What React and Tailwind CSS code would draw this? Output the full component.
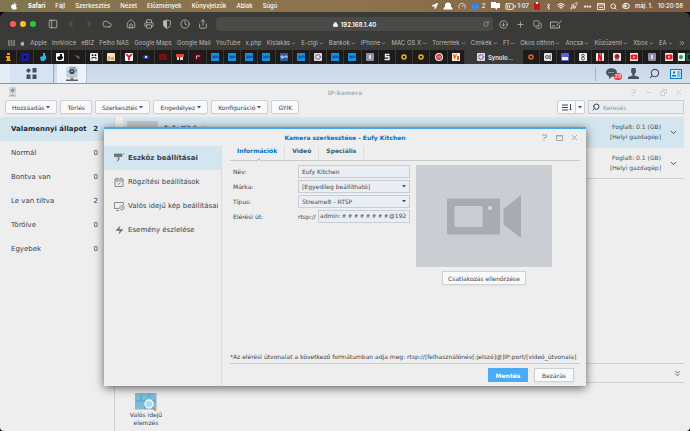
import React, { useState } from 'react';
import {
  BatteryMedium,
  Bluetooth,
  ChevronDown,
  ChevronLeft,
  ChevronRight,
  ChevronsDown,
  ChevronsRight,
  CircleArrowDown,
  Clock,
  Cloud,
  Copy,
  Ellipsis,
  Gauge,
  House,
  Lock,
  PanelLeft,
  Plus,
  Printer,
  Rocket,
  RotateCw,
  Search,
  Share,
  ToggleLeft,
  Wifi,
  Zap
} from 'lucide-react';
import { FaApple, FaLocationArrow } from 'react-icons/fa';

const menus = ['Fájl', 'Szerkesztés', 'Nézet', 'Előzmények', 'Könyvjelzők', 'Ablak', 'Súgó'];

const bookmarks = [
  { name: 'Apple' },
  { name: 'InnVoice' },
  { name: 'eBIZ' },
  { name: 'Felho NAS' },
  { name: 'Google Maps' },
  { name: 'Google Mail' },
  { name: 'YouTube' },
  { name: 'x.php' },
  { name: 'Kislakás', folder: true },
  { name: 'E-cigi', folder: true },
  { name: 'Bankok', folder: true },
  { name: 'iPhone', folder: true },
  { name: 'MAC OS X', folder: true },
  { name: 'Torrentek', folder: true },
  { name: 'Címkék', folder: true },
  { name: 'F1', folder: true },
  { name: 'Okos otthon', folder: true },
  { name: 'Ancsa', folder: true },
  { name: 'Közüzemi', folder: true },
  { name: 'Xbox', folder: true },
  { name: 'EA', folder: true },
];

const tabsBefore = [
  'info', 'ring-blue', 'duck', 'duck-white', 'dim', 'panda', 'orange', 'y', 'eye', 'darkred', 'mail', 'maroon',
  'dsm', 'dsm', 'dsm', 'dsm', 'sim', 'dsm', 'flower', 'dsm', 'dsm', 'grey', 's', 'ring-yellow', 'ring-yellow',
  'target', 'split',
];
const tabsAfter = ['ring-orange', 'signal', 'ghost', 'b', 'n', 'bug', 'youtube', 'grey', 'youtube'];

const states = [
  { name: 'Valamennyi állapot', count: 2 },
  { name: 'Normál', count: 0 },
  { name: 'Bontva van', count: 0 },
  { name: 'Le van tiltva', count: 2 },
  { name: 'Törölve', count: 0 },
  { name: 'Egyebek', count: 0 },
];

const Favicon = ({ kind }) => {
  const drawings = {
    info: <path d="M3 0h3v2H3zM2 3h4v4h1v1H2V7h1V5H2z" fill="#f39a1b" />,
    'ring-blue': <><path d="M1.500 1.500h5v5h-5z" fill="#0a0a30" stroke="#1620d8" strokeWidth="2" /><path d="M0 0h2v2H0zM6 0h2v2H6zM0 6h2v2H0zM6 6h2v2H6z" fill="#1018b0" /></>,
    duck: <path d="M4 0h2v2l1 1v3L5 8H2L1 4l3-1z" fill="#2db4ec" />,
    'duck-white': <><rect width="8" height="8" rx="1" fill="#fff" /><path d="M4 1h2v2l1 1v1L5 7H2L1 4l3-1z" fill="#111" /></>,
    dim: <path d="M2 2l4 1 1 3-3-1z" fill="#6c6045" />,
    panda: <><rect width="8" height="8" rx="1" fill="#eee" /><circle cx="2.500" cy="2.200" r=".9" /><circle cx="5.500" cy="2.200" r=".9" /><path d="M2 6.500V4.500h4v2" fill="none" stroke="#111" strokeWidth=".8" /></>,
    orange: <><rect width="8" height="8" rx="1" fill="#f3e6c9" /><path d="M1 3h2v4H1zM4 4h3v3H4z" fill="#eda52d" /></>,
    y: <><rect width="8" height="8" rx="1" fill="#fff" /><path d="M1.200 1L4 4.200 6.800 1M4 4v3.500" fill="none" stroke="#d8142c" strokeWidth="1.800" /></>,
    eye: <><ellipse cx="4" cy="4" rx="3.500" ry="2" fill="#1c3c86" /><circle cx="4" cy="4" r="1.200" fill="#dfe9ff" /></>,
    darkred: <path d="M0 1h8v6H0z" fill="#701317" />,
    mail: <><path d="M0 1h8v3H0z" fill="#e04338" /><path d="M1 4h2v3H1zM4 4h3v3H4z" fill="#ddd" /></>,
    maroon: <><path d="M0 0h8v8H0z" fill="#4e0c10" /><path d="M2 2.500h4v1H2zM2 3h1v3H2z" fill="#c8b9b9" /></>,
    dsm: <><rect width="8" height="8" fill="#1590e6" /><path d="M1 3h1.500v2H1M4.500 3h-1v1h1v1h-1M5.500 5V3h1.500v2" fill="none" stroke="#0a4374" strokeWidth=".7" /></>,
    sim: <><rect width="8" height="8" fill="#2a5f9e" /><path d="M2.500 3H1v1h1.500v1H1M3.700 3v2M5 5V3h2v2" fill="none" stroke="#fff" strokeWidth=".7" /></>,
    flower: <><rect width="8" height="8" rx="1" fill="#e6e0ee" /><circle cx="4" cy="4" r="2.300" fill="none" stroke="#84749f" strokeWidth="1.800" strokeDasharray="1 .5" /></>,
    grey: <><rect width="8" height="8" rx="1" fill="#8c90a2" /><path d="M3 2h2v4H3z" fill="#dde" /></>,
    s: <path d="M6.500 1.500h-4v2.200h3.500v2.800H1.500" fill="none" stroke="#f4f4f4" strokeWidth="1.400" />,
    'ring-yellow': <circle cx="4" cy="4" r="2" fill="none" stroke="#e9b824" strokeWidth="1.500" />,
    'ring-orange': <circle cx="4" cy="4" r="2" fill="none" stroke="#dd6a2c" strokeWidth="1.500" />,
    target: <><circle cx="4" cy="4" r="4" fill="#fff" /><circle cx="4" cy="4" r="3" fill="#c8202a" /><path d="M3 2.500v3M5 2.500v3" stroke="#fff" strokeWidth=".8" /></>,
    split: <><rect width="8" height="8" fill="#f6efe8" /><path d="M1 1h1l1 2 1-2h1L3 6H2zM5 3h2v4H5z" fill="#ee5a24" /></>,
    signal: <><rect width="8" height="8" rx="1" fill="#e9e9e9" /><circle cx="3" cy="4" r="1.500" fill="none" stroke="#333" strokeWidth=".8" /><path d="M5 2q2 2 0 4M6.500 1v6" fill="none" stroke="#555" strokeWidth=".7" /></>,
    ghost: <><rect width="8" height="8" rx="1" fill="#5566d4" /><path d="M1 4h6v3H1z" fill="#f2f2ff" /></>,
    b: <><rect width="8" height="8" rx="1" fill="#eee" /><circle cx="4" cy="2.500" r="1.300" fill="none" stroke="#333" strokeWidth=".8" /><circle cx="4" cy="5.500" r="1.500" fill="none" stroke="#333" strokeWidth=".8" /></>,
    n: <><rect width="8" height="8" rx="1" fill="#f7f0f0" /><path d="M2 0h1.500l1 4V0H6v8H4.500l-1-4v4H2z" fill="#d2141e" /></>,
    bug: <><rect width="8" height="8" rx="1" fill="#eee" /><circle cx="4" cy="3.500" r="2.500" fill="#b8232b" /><path d="M2 7h4M3 3h2" stroke="#333" strokeWidth=".8" /></>,
    youtube: <><rect width="8" height="8" rx="1" fill="#fff" /><rect x="0.500" y="1.500" width="7" height="5" rx="1" fill="#f2161b" /><path d="M3.300 2.800v2.400L5.300 4z" fill="#fff" /></>,
  };
  return <svg viewBox="0 0 8 8" className="w-2 h-2 shrink-0">{drawings[kind]}</svg>;
};

const CameraIcon = ({ className }) => (
  <svg viewBox="0 0 14 16" className={className}>
    <rect x="1.500" y="0.500" width="11" height="11" rx="1" fill="#c3c9ce" />
    <path d="M2 1h10v5H2z" fill="#5ba3c6" />
    <path d="M2 1l3 0-3 5zM12 1v3l-2-3z" fill="#d6ecf6" />
    <circle cx="7" cy="5.500" r="3.600" fill="#cfd6db" />
    <circle cx="7" cy="5.500" r="2.700" fill="#3b4750" />
    <circle cx="7" cy="5.200" r="1" fill="#8fb6cf" />
    <path d="M5.500 11.500h3V14h-3z" fill="#7e868d" />
    <path d="M1 13.500h12v1.500H1z" fill="#59626a" />
  </svg>
);

const MenuBar = () => (
  <header className="h-3 shrink-0 flex items-center justify-between pl-2.5 pr-[7px] bg-linear-to-r from-[#83754f] via-[#8e734c] to-[#7d5e46] text-white text-[6px] leading-3 font-medium">
    <nav className="flex items-center gap-2.5">
      <FaApple size={8} />
      <a href="#safari" className="font-bold">Safari</a>
      {menus.map((m) => <a key={m} href={`#${m}`}>{m}</a>)}
    </nav>
    <div className="flex items-center gap-[5px]">
      <FaLocationArrow size={6} />
      <svg viewBox="0 0 10 8" className="w-2.5 h-2"><path d="M2 5V3.500a3 3 0 0 1 6 0V5l1.500 1v1.500h-9V6z" fill="#fff" /></svg>
      <Gauge size={8} />
      <span className="flex items-center gap-[3px]">
        <svg viewBox="0 0 8 8" className="w-2 h-2"><circle cx="4" cy="4" r="3.500" fill="#2c8df2" /><path d="M1.500 1l2.500 1.500L6.500 1 4 3.500z" fill="#195fae" /></svg>
        2
      </span>
      <svg viewBox="0 0 9 8" className="w-[9px] h-2"><path d="M0 0h5v1h4v5H6v2L4 6H0z" fill="#fff" /></svg>
      <span className="flex items-center gap-0.5"><BatteryMedium size={11} /> 1:07</span>
      <svg viewBox="0 0 6 8" className="w-1.5 h-2"><rect y="1" width="6" height="7" rx="1" fill="#c4161c" /><path d="M2 0h2v2H2z" fill="#eee" /></svg>
      <Bluetooth size={7} />
      <Wifi size={8} strokeWidth={3} />
      <Rocket size={8} />
      <Ellipsis size={9} strokeWidth={4} />
      <svg viewBox="0 0 8 7" className="w-2 h-[7px]"><path d="M.5.5h7v6h-7zM0 2h8M2 4.500h4" fill="none" stroke="#fff" strokeWidth=".8" /></svg>
      <Search size={7} strokeWidth={3} />
      <ToggleLeft size={8} strokeWidth={3} />
      <span>máj. 1.</span>
      <span>10:20:58</span>
    </div>
  </header>
);

const BrowserBar = () => (
  <div className="shrink-0 bg-[#3a3a38] text-[#b9b9b7] rounded-t-md">
    <div className="flex items-center h-6 pl-2.5 pr-32">
      <div className="flex gap-1 pr-3">
        <span className="size-1.5 rounded-full bg-[#fc5b57]" />
        <span className="size-1.5 rounded-full bg-[#fdbc30]" />
        <span className="size-1.5 rounded-full bg-[#2bc840]" />
      </div>
      <div className="flex items-center gap-2 pr-2">
        <button aria-label="Oldalsáv"><PanelLeft size={10} /></button>
        <button aria-label="Vissza" className="text-[#777]"><ChevronLeft size={10} /></button>
        <button aria-label="Előre" className="text-[#777]"><ChevronRight size={10} /></button>
        <button aria-label="iCloud"><Cloud size={10} /></button>
        <button aria-label="Kezdőlap" className="pl-1.5"><House size={10} /></button>
        <button aria-label="Nyomtatás"><Printer size={10} /></button>
        <button aria-label="Adatvédelem">
          <svg viewBox="0 0 10 10" className="size-2.5"><path d="M5 1l3.500 1v3.500Q8.500 8 5 9.500 1.500 8 1.500 5.500V2z" fill="none" stroke="currentColor" strokeWidth=".8" /><path d="M5 1v8.500Q1.500 8 1.500 5.500V2z" fill="currentColor" /></svg>
        </button>
        <button aria-label="Előzmények"><Clock size={10} /></button>
        <button aria-label="Megosztás"><Share size={10} /></button>
      </div>
      <div className="relative flex-1 h-3.5 flex items-center justify-center gap-[3px] rounded bg-[#4a4a48] text-white text-[6px] font-semibold">
        <Lock size={5} fill="currentColor" strokeWidth={4} />
        <span>192.168.1.40</span>
        <button aria-label="Újratöltés" className="absolute right-1 text-[#b9b9b7]"><RotateCw size={6} /></button>
      </div>
      <div className="flex items-center gap-2 pl-1.5">
        <button aria-label="Letöltések"><CircleArrowDown size={9} /></button>
        <button aria-label="Új lap"><Plus size={9} /></button>
        <button aria-label="Lapok"><Copy size={9} className="rotate-180" /></button>
        <button aria-label="Jegyzet">
          <svg viewBox="0 0 12 9" className="w-3 h-[9px]"><path d="M8 2H.5v6h9V5M2 6h3M11.500.5L6.500 6" fill="none" stroke="currentColor" strokeWidth=".9" /></svg>
        </button>
      </div>
    </div>
    <nav className="flex items-center justify-between h-3.5 pl-2 pr-1 text-[6px] leading-3 whitespace-nowrap">
      <svg viewBox="0 0 7 6" className="w-[7px] h-1.5"><path d="M0 1h7M0 3h7M0 5h7" stroke="currentColor" strokeDasharray="1.800 .8" strokeWidth="1.200" /></svg>
      <FaApple size={5} />
      {bookmarks.map((b) => (
        <a key={b.name} href={`#${b.name}`} className="flex items-center gap-px">
          {b.name}
          {b.folder && <ChevronDown size={5} strokeWidth={3} />}
        </a>
      ))}
      <ChevronsRight size={8} />
    </nav>
    <div className="flex h-3.5 bg-[#1d1c1b]">
      {tabsBefore.map((t, i) => (
        <button key={i} aria-label={t} className="flex-1 flex items-center justify-center border-r border-[#363534]"><Favicon kind={t} /></button>
      ))}
      <button className="w-[58px] shrink-0 flex items-center gap-[3px] pl-3 bg-[#3a3a38] text-white text-[6px] font-medium">
        <Favicon kind="flower" />
        Synolo...
      </button>
      {tabsAfter.map((t, i) => (
        <button key={i} aria-label={t} className="flex-1 flex items-center justify-center border-r border-[#363534]"><Favicon kind={t} /></button>
      ))}
      <div className="w-3 shrink-0 flex items-center">
        <svg viewBox="0 0 12 8" className="w-3 h-2"><rect width="7" height="8" fill="#e8eee8" /><circle cx="3" cy="4" r="2" fill="#2d9b46" /><path d="M12 1H9v6h3" fill="none" stroke="#1e8f8c" /></svg>
      </div>
    </div>
  </div>
);

const Taskbar = () => (
  <div className="shrink-0 flex h-5 bg-linear-to-b from-[#c8d6e8] to-[#d5e0ee] border-b border-[#8d97a2]">
    <div className="w-2.5 bg-[#e4ecf6]" />
    <button aria-label="Főmenü" className="w-11 flex items-center justify-center bg-[#d8e3f1] border-r border-[#9aa9bd]">
      <svg viewBox="0 0 11 11" className="size-[11px]" fill="#435260"><path d="M2.500 0L5 2.500 2.500 5 0 2.500zM6.500 0h4v4.500h-4zM.5 6.500h4V11h-4zM6.500 6.500h4V11h-4z" /></svg>
    </button>
    <button aria-label="IP-kamera" className="w-[30px] ml-[3px] flex items-center justify-center bg-[#eef3f9] border-r border-[#b3c0d1]">
      <CameraIcon className="w-3.5 h-4" />
    </button>
    <div className="flex-1 flex items-center justify-end gap-2.5 pr-2 text-[#46535f]">
      <span className="h-3.5 w-px bg-[#a8b5c5]" />
      <button aria-label="Értesítések" className="relative">
        <svg viewBox="0 0 12 11" className="w-3 h-[11px]"><ellipse cx="5.500" cy="4.500" rx="5.500" ry="4.200" fill="currentColor" /><path d="M3 8v3l3-2.500z" fill="currentColor" /><path d="M2.500 4.500h6" stroke="#c8d6e8" strokeDasharray="1 1" /></svg>
        <span className="absolute -right-1 -bottom-px rounded-full bg-[#f0363f] px-px text-white text-[5px] leading-[7px]">29</span>
      </button>
      <button aria-label="Felhasználó">
        <svg viewBox="0 0 11 11" className="size-[11px]" fill="currentColor"><path d="M3.500 0h4l.5 4-1.500 2.500v1L11 9v2H0V9l4.500-1.500v-1L3 4z" /></svg>
      </button>
      <button aria-label="Keresés"><Search size={11} strokeWidth={2.5} className="-scale-x-100" /></button>
      <button aria-label="Widgetek">
        <svg viewBox="0 0 12 10" className="w-3 h-2.5"><rect x=".5" y=".5" width="11" height="9" fill="#d6e8f7" stroke="#0b78c4" /><path d="M3 2.500h2v2H3zM2 6h4v1.500H2z" fill="#0b78c4" /><path d="M7 3h3.500M7 5h3.500M7 7h3.500" fill="none" stroke="#0b78c4" strokeWidth=".8" /></svg>
      </button>
    </div>
  </div>
);

const toolButton = 'h-[14px] flex items-center gap-0.5 px-1.5 rounded-xs border border-[#cdd1d6] bg-[#f8f9fb] shadow-xs';

const Caret = () => <svg viewBox="0 0 4 3" className="w-1 h-[3px]"><path d="M0 0h4L2 2.500z" fill="#46535f" /></svg>;

const Toolbar = () => (
  <div className="flex items-center gap-[3px] pl-[5px] pr-1.5 pb-[3px] text-[6px]">
    <button className={toolButton}>Hozzáadás <Caret /></button>
    <button className={toolButton}>Törlés</button>
    <button className={toolButton}>Szerkesztés <Caret /></button>
    <button className={toolButton}>Engedélyez <Caret /></button>
    <button className={toolButton}>Konfiguráció <Caret /></button>
    <button className={toolButton}>GYIK</button>
    <div className="ml-auto flex h-[14px] rounded-xs border border-[#cdd1d6] bg-[#f8f9fb] shadow-xs">
      <button aria-label="Rendezés" className="w-[18px] flex items-center justify-center border-r border-[#cdd1d6]">
        <svg viewBox="0 0 10 7" className="w-2.5 h-[7px]"><path d="M0 1h6M0 3.500h6M0 6h6M8.500 0v6M7.500 5l1 1 1-1" fill="none" stroke="#3d4a56" /></svg>
      </button>
      <button aria-label="Rendezési mód" className="w-2 flex items-center justify-center"><Caret /></button>
    </div>
    <label className="w-24 h-[14px] flex items-center gap-[3px] px-[3px] border border-[#c8cfd6] bg-[#e9eef2]">
      <Search size={8} className="-scale-x-100 shrink-0" strokeWidth={3} />
      <input type="search" placeholder="Keresés" aria-label="Keresés" className="w-full min-w-0 outline-none placeholder:text-[#8c959d]" />
    </label>
  </div>
);

const CameraRow = ({ name, active }) => (
  <li className={`h-[31px] flex items-center border-b ${active ? 'bg-[#d3e5ee] border-[#d3e5ee]' : 'border-[#cfcfcf]'}`}>
    <div className="w-[31px] h-[23px] ml-1 bg-[#c3c6c9]" />
    <p className="self-start pt-[7px] pl-1.5 flex-1 text-[6px] leading-[8px] font-bold">{name}</p>
    <p className="text-right leading-[10px] text-[#46505a]">Foglalt: 0.1 (GB)<br />[Helyi gazdagép]</p>
    <button aria-label="Részletek" className="px-1.5 ml-0.5"><ChevronDown size={9} strokeWidth={2.5} /></button>
  </li>
);

const navItems = [
  {
    name: 'Eszköz beállításai',
    icon: <path d="M0 1h8v2.500H0zM9 1l1.500-.5M5 4v2.500L3 8.500M3 5h2" fill="#6c757c" stroke="#6c757c" strokeWidth=".8" />,
  },
  {
    name: 'Rögzítési beállítások',
    icon: <path d="M1 2h8v7.500H1zM1 4h8M3 .5v2M7 .5v2M3.500 6.500l1 1 2-2" fill="none" stroke="#6c757c" strokeWidth=".8" />,
  },
  {
    name: 'Valós idejű kép beállításai',
    icon: <path d="M5 7.500H.5v-6h9V4M2 9.500h3M8 4.500a2.200 2.200 0 1 0 .01 0zM8 5.500v1.500h1" fill="none" stroke="#6c757c" strokeWidth=".8" />,
  },
  { name: 'Esemény észlelése', icon: null },
];

const fieldBox = 'h-[13px] w-[112px] border border-[#c6cfd7] bg-[#e8eef3] text-[6px] text-[#3d4852] outline-none';

const EditDialog = () => {
  const [tab, setTab] = useState('Információk');
  const [name, setName] = useState('Eufy Kitchen');
  const [path, setPath] = useState('admin:＃＃＃＃＃＃＃＃@192');

  return (
    <section role="dialog" aria-label="Kamera szerkesztése" className="absolute inset-x-[104px] top-[43px] bottom-[45px] flex flex-col border-t-2 border-[#46a5ec] bg-[#eeeeee] shadow-[0_2px_9px_rgba(0,0,0,0.6)] text-[6px]">
      <div className="relative h-[17px] shrink-0 flex items-center justify-center">
        <h2 className="font-bold text-[#0470bd]">Kamera szerkesztése - Eufy Kitchen</h2>
        <div className="absolute right-2 flex items-center gap-2 text-[#9aa9b6]">
          <button aria-label="Súgó"><svg viewBox="0 0 7 7" className="size-[7px]"><path d="M1 1h4.500v2.500H3V5M3 6v1" fill="none" stroke="currentColor" /></svg></button>
          <button aria-label="Teljes méret"><svg viewBox="0 0 7 7" className="size-[7px]"><path d="M.5 1.500h6v5h-6zM0 2h7" fill="none" stroke="currentColor" /></svg></button>
          <button aria-label="Ablak bezárása"><svg viewBox="0 0 7 7" className="size-[7px]"><path d="M1 1l5 5M6 1L1 6" fill="none" stroke="currentColor" /></svg></button>
        </div>
      </div>
      <div className="flex-1 min-h-0 flex">
        <nav className="w-[118px] shrink-0 border-r border-[#dcdcdc] text-[7px] whitespace-nowrap">
          {navItems.map((item, i) => (
            <a
              key={item.name}
              href={`#${item.name}`}
              className={`h-6 flex items-center gap-[3px] pl-2.5 ${i === 0 ? 'bg-[#d3e5ee] font-bold' : ''}`}
            >
              {item.icon ? <svg viewBox="0 0 11 10" className="w-[11px] h-2.5">{item.icon}</svg> : <Zap size={10} className="w-[11px]" fill="#6c757c" stroke="none" />}
              {item.name}
            </a>
          ))}
        </nav>
        <div className="flex-1 min-w-0 flex flex-col pl-2 pr-1.5">
          <div role="tablist" className="h-[15px] shrink-0 flex items-start border-b border-[#c9c9c9] font-bold">
            {['Információk', 'Videó', 'Speciális'].map((t) => (
              <button
                key={t}
                role="tab"
                aria-selected={tab === t}
                onClick={() => setTab(t)}
                className={`relative h-[14px] px-[7px] pb-1.5 border-r border-[#dedede] ${tab === t ? 'text-[#0470bd]' : 'text-[#4c5660]'}`}
              >
                {t}
                {tab === t && <span className="absolute -bottom-[3px] left-1/2 size-1 rotate-45 border-l border-t border-[#c0c0c0] bg-[#eeeeee]" />}
              </button>
            ))}
          </div>
          <div className="flex-1 flex items-start gap-1.5 pt-1 pl-[3px]">
            <form className="flex flex-col gap-[2px]">
              <div className="flex items-center">
                <label htmlFor="name" className="w-[65px]">Név:</label>
                <input id="name" className={`${fieldBox} px-[3px]`} value={name} onChange={(e) => setName(e.target.value)} />
              </div>
              <div className="flex items-center">
                <label htmlFor="brand" className="w-[65px]">Márka:</label>
                <div className="relative flex items-center">
                  <select id="brand" className={`${fieldBox} px-[3px] appearance-none`}>
                    <option>[Egyedileg beállítható]</option>
                  </select>
                  <span className="absolute right-1 pointer-events-none"><Caret /></span>
                </div>
              </div>
              <div className="flex items-center">
                <label htmlFor="type" className="w-[65px]">Típus:</label>
                <div className="relative flex items-center">
                  <select id="type" className={`${fieldBox} px-[3px] appearance-none`}>
                    <option>Streamelt - RTSP</option>
                  </select>
                  <span className="absolute right-1 pointer-events-none"><Caret /></span>
                </div>
              </div>
              <div className="flex items-center">
                <label htmlFor="path" className="w-[65px]">Elérési út:</label>
                <span className="w-5">rtsp://</span>
                <input id="path" className="h-[13px] w-[92px] px-px border border-[#c6cfd7] bg-[#e8eef3] text-[#3d4852] outline-none" value={path} onChange={(e) => setPath(e.target.value)} />
              </div>
            </form>
            <div className="w-[136px] flex flex-col items-center gap-1">
              <div className="w-full h-[102px] flex items-center justify-center bg-[#caced3]">
                <svg viewBox="0 0 74 43" className="w-[74px] h-[43px]" fill="#a8abb0">
                  <path fillRule="evenodd" d="M1 3.500h51q1 0 1 1v34q0 1-1 1H1q-1 0-1-1v-34q0-1 1-1zM9 11q-1.500 0-1.500 1.500v18Q7.500 32 9 32h25q1.500 0 1.500-1.500v-18Q35.500 11 34 11z" />
                  <circle cx="43" cy="13" r="2" fill="#d5d9dd" />
                  <path d="M56.500 14L74 0v43L56.500 29.500z" />
                </svg>
              </div>
              <button className="h-[14px] px-[5px] border border-[#cdd1d6] bg-[#f8f9fb] shadow-xs">Csatlakozás ellenőrzése</button>
            </div>
          </div>
          <p className="pb-0.5 whitespace-nowrap">*Az elérési útvonalat a következő formátumban adja meg: rtsp://[felhasználónév[:jelszó]@]IP:port/[videó_útvonala]</p>
          <div className="flex justify-end gap-1.5 border-t border-[#cccccc] pt-1 pb-1 pr-1.5">
            <button className="w-10 h-[14px] bg-[#4aabf5] font-bold text-white">Mentés</button>
            <button className="w-10 h-[14px] border border-[#cdd1d6] bg-[#f8f9fb] shadow-xs">Bezárás</button>
          </div>
        </div>
      </div>
    </section>
  );
};

const App = () => (
  <div className="h-screen flex flex-col overflow-hidden bg-black font-['Inter',sans-serif]">
    <MenuBar />
    <BrowserBar />
    <Taskbar />
    <main className="relative flex-1 min-h-0 flex flex-col overflow-hidden rounded-b bg-[#eeeeee] font-['DejaVu_Sans',sans-serif] text-[6px] text-[#37424d]">
      <div className="relative h-4 shrink-0 flex items-center justify-center">
        <CameraIcon className="absolute left-2 w-[9px] h-2.5 opacity-60" />
        <h1 className="font-bold text-[#b3b3b3]">IP-kamera</h1>
        <div className="absolute right-2 flex items-center gap-2 text-[#cfcfcf]">
          <svg viewBox="0 0 7 7" className="size-[7px]"><path d="M1 1h4.500v2.500H3V5M3 6v1" fill="none" stroke="currentColor" /></svg>
          <svg viewBox="0 0 7 7" className="size-[7px]"><path d="M1 3.500h5" stroke="currentColor" /></svg>
          <svg viewBox="0 0 7 7" className="size-[7px]"><path d="M.5 2.500h4v4h-4zM2.500 2V.5h4v4H5" fill="none" stroke="currentColor" /></svg>
          <svg viewBox="0 0 7 7" className="size-[7px]"><path d="M1 1l5 5M6 1L1 6" fill="none" stroke="currentColor" /></svg>
        </div>
      </div>
      <Toolbar />
      <div className="flex-1 min-h-0 flex">
        <nav className="w-[115px] shrink-0 border-r border-[#d2d2d2] text-[7px]">
          {states.map((s, i) => (
            <a key={s.name} href={`#${s.name}`} className={`h-6 flex items-center justify-between pl-[11px] pr-4 ${i === 0 ? 'bg-[#d3e5ee] font-bold text-[#1f2b36]' : ''}`}>
              <span>{s.name}</span>
              <span>{s.count}</span>
            </a>
          ))}
        </nav>
        <div className="flex-1 flex flex-col pl-2 pr-1.5">
          <ul className="flex-1">
            <CameraRow name="Eufy Kitchen" active />
            <CameraRow />
          </ul>
          <div className="h-5 flex items-center justify-end border-y border-[#cfcfcf]">
            <button aria-label="Lenyitás" className="pr-0.5"><ChevronsDown size={9} /></button>
          </div>
          <div className="h-12 pt-2.5">
            <button className="w-[46px] flex flex-col items-center leading-[8px]">
              <svg viewBox="0 0 22 18" className="w-[22px] h-[18px]">
                <rect width="21" height="16" fill="#78bdd8" stroke="#a8aab8" />
                <path d="M1 8h20M6 1v7M10 8v8M14 1v4" stroke="#5a9fc0" />
                <circle cx="14" cy="11" r="4" fill="#a8dcf5" stroke="#f4f8fa" strokeWidth="1.500" />
                <path d="M17.500 14.500L21 18" stroke="#c08a68" strokeWidth="1.500" />
              </svg>
              Valós idejű elemzés
            </button>
          </div>
        </div>
      </div>
      <EditDialog />
    </main>
  </div>
);

export default App;
